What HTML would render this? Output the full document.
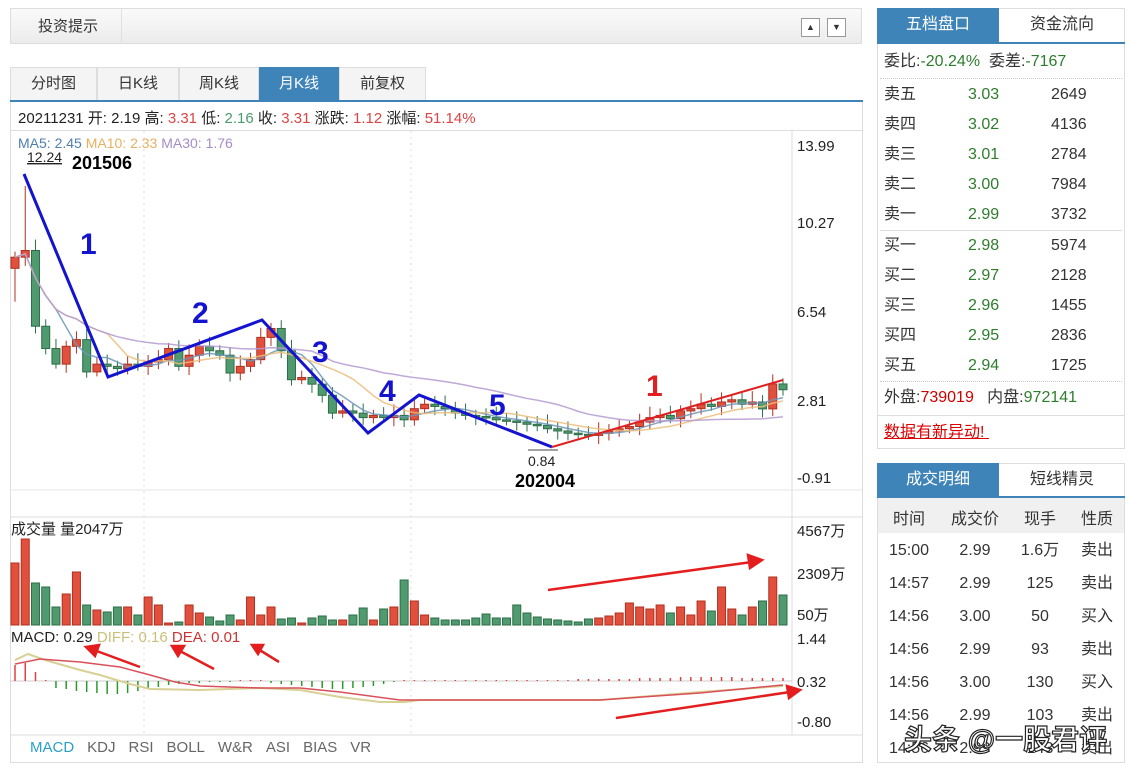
<!DOCTYPE html>
<html><head><meta charset="utf-8">
<style>
*{margin:0;padding:0;box-sizing:border-box}
body{width:1134px;height:774px;background:#fff;position:relative;overflow:hidden;font-family:"Liberation Sans","Noto Sans CJK SC",sans-serif;color:#333}
.a{position:absolute;white-space:nowrap}
.topbar{left:10px;top:8px;width:852px;height:36px;background:linear-gradient(#fafafa,#ececec);border:1px solid #ddd}
.tab{top:67px;height:33px;border:1px solid #ddd;border-bottom:none;background:#f4f4f4;font-size:15px;text-align:center;line-height:32px;color:#333}
.g{color:#2d7d2d}.r{color:#d44}
.rt{font-size:16px}
</style></head><body>
<div class="a topbar"></div>
<div class="a" style="left:10px;top:8px;width:112px;height:36px;border-right:1px solid #e0e0e0"></div>
<div class="a" style="left:38px;top:15px;font-size:15px;color:#333">投资提示</div>
<div class="a" style="left:801px;top:18px;width:19px;height:19px;border:1px solid #999;background:#fff;font-size:9px;text-align:center;line-height:17px">▲</div>
<div class="a" style="left:827px;top:18px;width:19px;height:19px;border:1px solid #999;background:#fff;font-size:9px;text-align:center;line-height:17px">▼</div>

<div class="a tab" style="left:10px;width:87px">分时图</div>
<div class="a tab" style="left:97px;width:82px">日K线</div>
<div class="a tab" style="left:179px;width:80px">周K线</div>
<div class="a tab" style="left:259px;width:80px;background:#3f84b9;color:#fff;border-color:#3f84b9">月K线</div>
<div class="a tab" style="left:339px;width:87px">前复权</div>
<div class="a" style="left:10px;top:100px;width:853px;height:2px;background:#3f84b9"></div>
<div class="a" style="left:10px;top:102px;width:853px;height:661px;border:1px solid #ddd;border-top:none"></div>
<div class="a" style="left:10px;top:130px;width:853px;height:1px;background:#ddd"></div>
<div class="a" style="left:18px;top:107px;font-size:15px;color:#222">20211231 开: 2.19 高: <span class="r">3.31</span> 低: <span style="color:#4a9a6a">2.16</span> 收: <span class="r">3.31</span> 涨跌: <span class="r">1.12</span> 涨幅: <span class="r">51.14%</span></div>
<div class="a" style="left:18px;top:135px;font-size:14px"><span style="color:#4e7fae">MA5: 2.45</span> <span style="color:#e8b060">MA10: 2.33</span> <span style="color:#a68cc4">MA30: 1.76</span></div>

<svg class="a" style="left:0;top:0" width="863" height="774" id="ch">
<line x1="10" y1="517" x2="862" y2="517" stroke="#ddd"/>
<line x1="10" y1="735" x2="862" y2="735" stroke="#ddd"/>
<line x1="10" y1="490" x2="862" y2="490" stroke="#e4e4e4"/>
<line x1="792" y1="131" x2="792" y2="735" stroke="#ddd"/>
<line x1="10" y1="681" x2="792" y2="681" stroke="#ccc"/>
<line x1="144" y1="131" x2="144" y2="735" stroke="#ddd" stroke-dasharray="2,4"/>
<line x1="411" y1="131" x2="411" y2="735" stroke="#ddd" stroke-dasharray="2,4"/>
<g id="cand"></g>
<g font-size="15" fill="#222" font-family="Liberation Sans,sans-serif">
<text x="797" y="151">13.99</text><text x="797" y="228">10.27</text><text x="797" y="317">6.54</text><text x="797" y="406">2.81</text><text x="797" y="483">-0.91</text>
<text x="797" y="536">4567万</text><text x="797" y="579">2309万</text><text x="797" y="620">50万</text>
<text x="797" y="644">1.44</text><text x="797" y="687">0.32</text><text x="797" y="727">-0.80</text>
</g>
<text x="27" y="162" font-size="14" fill="#222" text-decoration="underline">12.24</text>
<text x="72" y="169" font-size="18" font-weight="bold" fill="#000">201506</text>
<line x1="528" y1="450" x2="558" y2="450" stroke="#444"/>
<text x="528" y="466" font-size="14" fill="#222">0.84</text>
<text x="515" y="487" font-size="18" font-weight="bold" fill="#000">202004</text>
<polyline points="24,174 108,377 262,320 368,433 419,395 552,447" fill="none" stroke="#1414d0" stroke-width="3"/>
<line x1="552" y1="447" x2="783" y2="380" stroke="#e02020" stroke-width="2"/>
<g font-size="30" font-weight="bold" fill="#1414d0" font-family="Liberation Sans,sans-serif">
<text x="80" y="254">1</text><text x="192" y="323">2</text><text x="312" y="362">3</text><text x="379" y="401">4</text><text x="489" y="415">5</text></g>
<text x="646" y="396" font-size="30" font-weight="bold" fill="#e02020">1</text>
<text x="11" y="534" font-size="15" fill="#222">成交量 量2047万</text>
<g id="macd"></g>
<polyline points="15,660 28,654 45,660 80,670 100,675 130,684 150,689 200,690 260,688 300,690 340,697 380,702 405,702 420,700 600,700 700,692 783,686" fill="none" stroke="#d8d094" stroke-width="2"/>
<polyline points="15,664 40,659 80,662 120,667 150,675 175,682 200,686 260,688 300,688 340,692 400,700 600,700 700,693 783,685" fill="none" stroke="#d9505a" stroke-width="1.5"/>
<text x="11" y="642" font-size="15" fill="#222">MACD: 0.29 <tspan fill="#c8c07a">DIFF: 0.16</tspan> <tspan fill="#c33">DEA: 0.01</tspan></text>
<g stroke="#e41e1e" stroke-width="2.5" fill="#e41e1e">
<line x1="548" y1="590" x2="752" y2="562"/><polygon points="762,560 748,555 750,568"/>
<line x1="140" y1="667" x2="94" y2="650"/><polygon points="86,647 99,645 95,656"/>
<line x1="214" y1="669" x2="178" y2="650"/><polygon points="172,646 184,646 178,656"/>
<line x1="279" y1="662" x2="258" y2="649"/><polygon points="252,645 263,645 258,654"/>
<line x1="616" y1="718" x2="790" y2="692"/><polygon points="800,690 787,686 789,698"/>
</g>
</svg>
<div class="a" style="left:30px;top:739px;font-size:15px;color:#666;word-spacing:0"><span style="color:#2aa0c9">MACD</span><span style="margin-left:13px">KDJ</span><span style="margin-left:13px">RSI</span><span style="margin-left:13px">BOLL</span><span style="margin-left:13px">W&amp;R</span><span style="margin-left:13px">ASI</span><span style="margin-left:13px">BIAS</span><span style="margin-left:13px">VR</span></div>

<!-- right panel 1 -->
<div class="a" style="left:877px;top:8px;width:248px;height:441px;border:1px solid #ddd"></div>
<div class="a rt" style="left:877px;top:8px;width:122px;height:34px;background:#3f84b9;color:#fff;text-align:center;line-height:33px">五档盘口</div>
<div class="a rt" style="left:999px;top:8px;width:126px;height:34px;text-align:center;line-height:33px">资金流向</div>
<div class="a" style="left:877px;top:42px;width:248px;height:2px;background:#3f84b9"></div>
<div class="a rt" style="left:884px;top:52px;line-height:20px">委比:<span class="g">-20.24%</span>&nbsp;&nbsp;委差:<span class="g">-7167</span></div>
<div class="a" style="left:880px;top:78px;width:242px;border-top:1px dotted #ccc"></div>
<div class="a rt" style="left:884px;top:80px;line-height:30px">卖五<br>卖四<br>卖三<br>卖二<br>卖一</div>
<div class="a rt g" style="left:968px;top:80px;line-height:30px">3.03<br>3.02<br>3.01<br>3.00<br>2.99</div>
<div class="a rt" style="left:1051px;top:80px;line-height:30px">2649<br>4136<br>2784<br>7984<br>3732</div>
<div class="a" style="left:880px;top:230px;width:242px;border-top:1px solid #ddd"></div>
<div class="a rt" style="left:884px;top:231px;line-height:30px">买一<br>买二<br>买三<br>买四<br>买五</div>
<div class="a rt g" style="left:968px;top:231px;line-height:30px">2.98<br>2.97<br>2.96<br>2.95<br>2.94</div>
<div class="a rt" style="left:1051px;top:231px;line-height:30px">5974<br>2128<br>1455<br>2836<br>1725</div>
<div class="a" style="left:880px;top:381px;width:242px;border-top:1px dotted #ccc"></div>
<div class="a rt" style="left:884px;top:388px;line-height:20px">外盘:<span style="color:#c00">739019</span>&nbsp;&nbsp;&nbsp;内盘:<span class="g">972141</span></div>
<div class="a" style="left:877px;top:415px;width:248px;border-top:1px solid #ddd"></div>
<div class="a rt" style="left:884px;top:423px;line-height:20px;color:#d00;text-decoration:underline">数据有新异动!&nbsp;</div>

<!-- right panel 2 -->
<div class="a" style="left:877px;top:463px;width:248px;height:300px;border:1px solid #ddd"></div>
<div class="a rt" style="left:877px;top:463px;width:122px;height:34px;background:#3f84b9;color:#fff;text-align:center;line-height:33px">成交明细</div>
<div class="a rt" style="left:999px;top:463px;width:126px;height:34px;text-align:center;line-height:33px">短线精灵</div>
<div class="a" style="left:877px;top:496px;width:248px;height:2px;background:#3f84b9"></div>
<div class="a" style="left:878px;top:498px;width:246px;height:35px;background:#f0f0f0"></div>
<div class="a rt" style="left:878px;top:505px;width:246px;display:flex"><span style="width:62px;text-align:center">时间</span><span style="width:70px;text-align:center">成交价</span><span style="width:60px;text-align:center">现手</span><span style="width:54px;text-align:center">性质</span></div>
<div class="a rt" style="left:878px;top:534px;width:246px;line-height:33px">
<div style="display:flex"><span style="width:62px;text-align:center">15:00</span><span style="width:70px;text-align:center">2.99</span><span style="width:60px;text-align:center">1.6万</span><span style="width:54px;text-align:center">卖出</span></div>
<div style="display:flex"><span style="width:62px;text-align:center">14:57</span><span style="width:70px;text-align:center">2.99</span><span style="width:60px;text-align:center">125</span><span style="width:54px;text-align:center">卖出</span></div>
<div style="display:flex"><span style="width:62px;text-align:center">14:56</span><span style="width:70px;text-align:center">3.00</span><span style="width:60px;text-align:center">50</span><span style="width:54px;text-align:center">买入</span></div>
<div style="display:flex"><span style="width:62px;text-align:center">14:56</span><span style="width:70px;text-align:center">2.99</span><span style="width:60px;text-align:center">93</span><span style="width:54px;text-align:center">卖出</span></div>
<div style="display:flex"><span style="width:62px;text-align:center">14:56</span><span style="width:70px;text-align:center">3.00</span><span style="width:60px;text-align:center">130</span><span style="width:54px;text-align:center">买入</span></div>
<div style="display:flex"><span style="width:62px;text-align:center">14:56</span><span style="width:70px;text-align:center">2.99</span><span style="width:60px;text-align:center">103</span><span style="width:54px;text-align:center">卖出</span></div>
<div style="display:flex"><span style="width:62px;text-align:center">14:56</span><span style="width:70px;text-align:center">2.99</span><span style="width:60px;text-align:center">143</span><span style="width:54px;text-align:center">卖出</span></div>
</div>
<div class="a" style="left:904px;top:718px;font-size:28px;color:#fff;-webkit-text-stroke:1.2px #222;font-weight:bold">头条 @一股君评</div>

<script>
var C=[9.0,9.3,5.9,4.9,4.2,5.0,5.3,3.85,4.2,4.1,4.0,4.2,4.1,4.3,4.4,4.9,4.1,4.6,5.0,4.8,4.6,3.8,4.1,4.4,5.4,5.8,4.8,3.5,3.6,3.3,2.8,2.0,2.1,2.0,1.8,1.9,1.8,1.9,1.7,2.2,2.4,2.3,2.2,2.0,1.9,1.85,1.8,1.7,1.65,1.6,1.5,1.45,1.3,1.2,1.1,1.05,1.0,1.1,1.2,1.3,1.4,1.6,1.8,1.9,1.75,2.1,2.2,2.4,2.3,2.5,2.6,2.4,2.5,2.19,3.31,3.05];
var V=[62,86,42,38,18,31,53,20,15,13,18,18,10,28,20,2,3,20,12,8,4,10,5,28,10,18,6,7,2,7,9,5,5,10,17,5,16,18,45,24,10,7,5,5,5,7,11,7,7,20,12,8,6,5,4,3,6,7,9,12,22,18,16,20,12,18,10,24,14,38,16,10,18,24,48,30];
var n=C.length,s="",y=function(p){return 146+(13.99-p)*22.28};
function X(i){return 15+i*(768/(n-1))}
var O=[8.5];for(var i=1;i<n;i++)O.push(C[i-1]);
for(i=0;i<n;i++){var x=X(i),o=O[i],c=C[i],up=c>=o,col=up?"#e0503c":"#4f9a6e",st=up?"#b03020":"#2d6e48";
var h=Math.max(o,c)+(i==1?2.9:0.25+0.3*((i*7)%5)/5),l=Math.min(o,c)-(i==0?1.5:0.2+0.25*((i*3)%4)/4);
s+='<line x1="'+x+'" y1="'+y(h)+'" x2="'+x+'" y2="'+y(l)+'" stroke="'+st+'"/>';
var t=y(Math.max(o,c)),b=y(Math.min(o,c));s+='<rect x="'+(x-4)+'" y="'+t+'" width="8" height="'+Math.max(1.5,b-t)+'" fill="'+col+'" stroke="'+st+'"/>';
var vh=V[i]||5;s+='<rect x="'+(x-4)+'" y="'+(625-vh)+'" width="8" height="'+vh+'" fill="'+col+'" stroke="'+st+'"/>';}
function ma(k,cl){var p="";for(var i=0;i<n;i++){var a=0,m=Math.min(k,i+1);for(var j=0;j<m;j++)a+=C[i-j];p+=X(i)+","+y(a/m)+" ";}s+='<polyline points="'+p+'" fill="none" stroke="'+cl+'" stroke-width="1.5" opacity=".85"/>';}
ma(5,"#6b96b8");ma(10,"#ebbd7a");ma(30,"#b49ad2");
document.getElementById("cand").innerHTML=s;
var H=[16,18,9,1,-7,-8,-10,-11,-12,-13,-13,-12,-10,-8,-6,-4,-3,-2,-2,-1,-1,-1,1,1,0,-2,-3,-4,-5,-6,-7,-8,-8,-7,-6,-5,-3,-1,0,1,0,0,0,0,0,0,0,1,1,1,1,1,1,1,1,2,2,2,2,2,2,3,3,3,3,4,4,4,4,4,4,3,3,3,3,3];
var q="";for(i=0;i<n;i++){var h=H[i]||1,x=X(i);q+='<line x1="'+x+'" y1="681" x2="'+x+'" y2="'+(681-h)+'" stroke="'+(h>0?"#e04040":"#2a9a2a")+'" stroke-width="1.5"/>';}
document.getElementById("macd").innerHTML=q;
</script>
</body></html>
